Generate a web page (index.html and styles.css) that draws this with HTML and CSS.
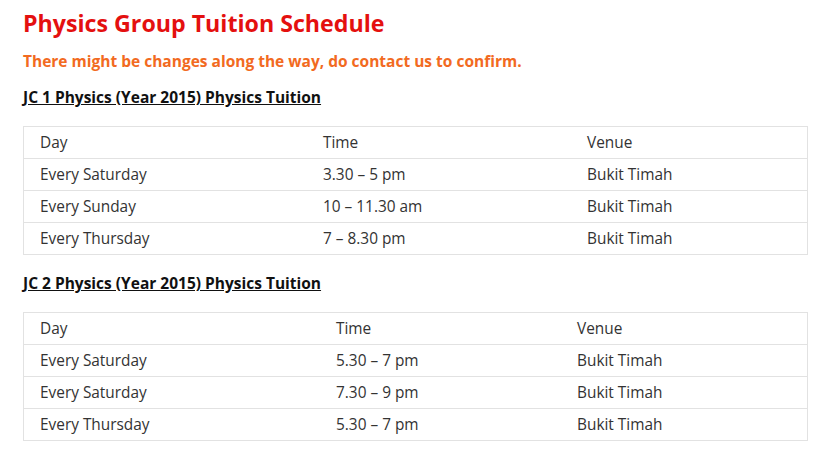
FILE: index.html
```html
<!DOCTYPE html>
<html>
<head>
<meta charset="utf-8">
<link rel="stylesheet" href="styles.css">
</head>
<body>
<div class="page">
  <h1 class="title">Physics Group Tuition Schedule</h1>
  <p class="notice">There might be changes along the way, do contact us to confirm.</p>
  <h2 class="section">JC 1 Physics (Year 2015) Physics Tuition</h2>
  <table class="sched sched-1">
    <tr><td>Day</td><td>Time</td><td>Venue</td></tr>
    <tr><td>Every Saturday</td><td>3.30 – 5 pm</td><td>Bukit Timah</td></tr>
    <tr><td>Every Sunday</td><td>10 – 11.30 am</td><td>Bukit Timah</td></tr>
    <tr><td>Every Thursday</td><td>7 – 8.30 pm</td><td>Bukit Timah</td></tr>
  </table>
  <h2 class="section section-2">JC 2 Physics (Year 2015) Physics Tuition</h2>
  <table class="sched sched-2">
    <tr><td>Day</td><td>Time</td><td>Venue</td></tr>
    <tr><td>Every Saturday</td><td>5.30 – 7 pm</td><td>Bukit Timah</td></tr>
    <tr><td>Every Saturday</td><td>7.30 – 9 pm</td><td>Bukit Timah</td></tr>
    <tr><td>Every Thursday</td><td>5.30 – 7 pm</td><td>Bukit Timah</td></tr>
  </table>
</div>
</body>
</html>
```
FILE: styles.css
```css
html, body {
  margin: 0;
  padding: 0;
  background: #fff;
}
body {
  font-family: "Open Sans", "Liberation Sans", sans-serif;
  color: #333;
}
.page {
  padding: 6px 24px 0 23px;
}
.title {
  margin: 0;
  font-size: 23.2px;
  line-height: 34px;
  font-weight: 700;
  color: #e4100f;
}
.notice {
  margin: 10px 0 0;
  font-size: 15.5px;
  line-height: 22px;
  font-weight: 700;
  color: #f26a21;
}
.section {
  margin: 14px 0 0;
  font-size: 15.5px;
  line-height: 22px;
  font-weight: 700;
  color: #111;
  text-decoration: underline;
}
.sched {
  width: 785px;
  border-collapse: collapse;
  margin: 18px 0 0;
  font-size: 15.4px;
}
.sched td {
  border-top: 1px solid #e2e2e2;
  border-bottom: 1px solid #e2e2e2;
  padding: 0 16px;
  height: 31px;
  line-height: 31px;
  text-align: left;
  vertical-align: middle;
}
.sched td:first-child { border-left: 1px solid #e2e2e2; }
.sched td:last-child { border-right: 1px solid #e2e2e2; }
.section-2 { margin-top: 17px; }
.sched-2 { margin-top: 18px; }
.sched-1 td:nth-child(1) { width: 251px; }
.sched-1 td:nth-child(2) { width: 232px; }
.sched-2 td:nth-child(1) { width: 264px; }
.sched-2 td:nth-child(2) { width: 209px; }
```
